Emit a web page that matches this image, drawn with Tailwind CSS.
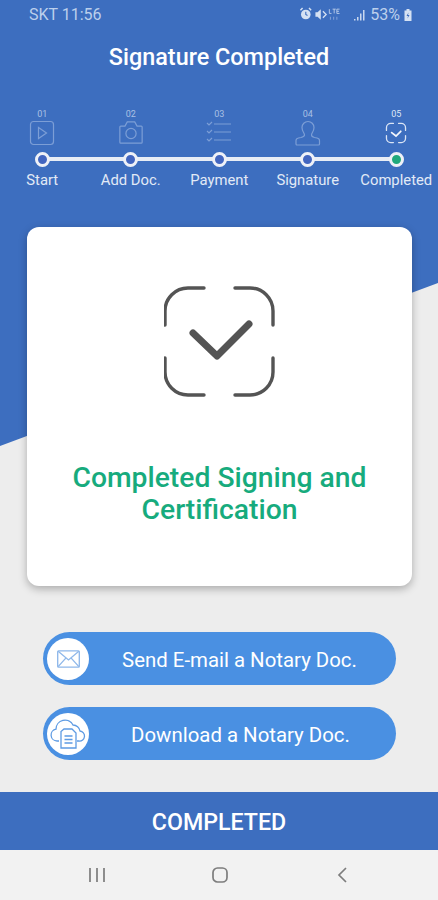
<!DOCTYPE html>
<html lang="en">
<head>
  <meta charset="UTF-8" />
  <meta name="viewport" content="width=device-width, initial-scale=1.0" />
  <title>Signature Completed</title>
  <script src="https://cdn.jsdelivr.net/npm/@tailwindcss/browser@4"></script>
</head>
<body class="bg-[#ededed] font-['Roboto',sans-serif] overflow-hidden">
  <div class="relative w-[438px] h-[900px] flex flex-col overflow-hidden">

    <!-- Diagonal background -->
    <svg class="absolute left-0 top-0" width="438" height="460" viewBox="0 0 438 460">
      <polygon points="0,0 438,0 438,283 0,446" fill="#3d6ebf" />
    </svg>

    <!-- Status bar -->
    <div class="relative h-[29px] shrink-0 pl-[29px] pr-[25px] flex items-center justify-between text-[#bcd0ec] text-[16px]">
      <span>SKT 11:56</span>
      <div class="flex items-center">
        <svg width="50" height="15" viewBox="0 0 46 14" fill="none" class="mr-[4px]">
          <circle cx="6" cy="7" r="4.500" fill="#d5e1f3" />
          <path d="M1 3l2-2M11 3L9 1" stroke="#d5e1f3" stroke-width="1.400" />
          <path d="M6 4.500V7l1.600 1" stroke="#3d6ebf" stroke-width="1" />
          <path d="M15 5h2l3-3v10l-3-3h-2z" fill="#d5e1f3" />
          <path d="M22 4l3 3-3 3" stroke="#d5e1f3" stroke-width="1.200" />
          <path d="M28 2v4h2M31 2h3M32.500 2v4M35 2h2.500M35 2v4h2.500M35 4h2" stroke="#c2d3ec" stroke-width=".8" />
          <path d="M29 9v3M32 9v3M35 9v3" stroke="#7f9fd6" stroke-width="1" />
        </svg>
        <svg width="12" height="13" viewBox="0 0 12 13" class="mr-[5px]">
          <path d="M1 11h1.500v1.500H1zM4 9h1.500v3.500H4zM7 5.500h1.500v7H7zM10 2h1.500v10.500H10z" fill="#c9d8ef" />
        </svg>
        <span>53%</span>
        <svg width="10" height="13" viewBox="0 0 10 13" class="ml-[3px]">
          <path d="M3.500 1h3v1.500H8.500V13h-7V2.500h2z" fill="#d5e1f3" />
          <path d="M5.500 4.500L3.500 8H5l-.5 2.500L6.500 7H5z" fill="#3d6ebf" />
        </svg>
      </div>
    </div>

    <!-- Title -->
    <h1 class="relative h-[56px] shrink-0 flex items-center justify-center text-white text-[23.400px] font-medium pt-[1px]">Signature Completed</h1>

    <!-- Steps -->
    <div class="relative mt-[22px] h-[113px] shrink-0 ml-[-2px] w-[442.500px] grid grid-cols-5">
      <div class="absolute left-[44px] right-[44px] top-[50px] h-[4px] bg-[#e8edf5]"></div>

      <div class="relative flex flex-col items-center">
        <span class="h-[13px] mt-[1px] text-[9px] leading-[13px] text-[#a9c0e4]">01</span>
        <svg class="-mt-[1px]" width="26" height="26" viewBox="0 0 26 26" fill="none" stroke="#7c9ed6" stroke-width="1.200">
          <rect x="1.500" y="1.500" width="23" height="23" rx="3" />
          <path d="M9.500 7.500l8 5.500-8 5.500z" />
        </svg>
        <span class="mt-[6px] size-[15px] rounded-full bg-[#4266c0] border-[3px] border-[#eef1f7]"></span>
        <span class="mt-[3px] text-[14.800px] leading-[20px] text-[#e2eaf6] whitespace-nowrap">Start</span>
      </div>

      <div class="relative flex flex-col items-center">
        <span class="h-[13px] mt-[1px] text-[9px] leading-[13px] text-[#a9c0e4]">02</span>
        <svg class="-mt-[1px]" width="26" height="26" viewBox="-1 0 28 28" fill="none" stroke="#7c9ed6" stroke-width="1.300">
          <path d="M2 6.500h4.500L9 2h8l2.500 4.500H24a1 1 0 0 1 1 1V24a1 1 0 0 1-1 1H2a1 1 0 0 1-1-1V7.500a1 1 0 0 1 1-1z" />
          <circle cx="13" cy="14.500" r="5.500" />
        </svg>
        <span class="mt-[6px] size-[15px] rounded-full bg-[#4266c0] border-[3px] border-[#eef1f7]"></span>
        <span class="mt-[3px] text-[14.800px] leading-[20px] text-[#e2eaf6] whitespace-nowrap">Add Doc.</span>
      </div>

      <div class="relative flex flex-col items-center">
        <span class="h-[13px] mt-[1px] text-[9px] leading-[13px] text-[#a9c0e4]">03</span>
        <svg class="-mt-[1px]" width="26" height="26" viewBox="0 0 26 26" fill="none" stroke="#7c9ed6" stroke-width="1.200">
          <path d="M1 3l2 2 3-3M1 11l2 2 3-3M1 19l2 2 3-3" />
          <path d="M8 4h17M8 12h17M8 20h17" />
        </svg>
        <span class="mt-[6px] size-[15px] rounded-full bg-[#4266c0] border-[3px] border-[#eef1f7]"></span>
        <span class="mt-[3px] text-[14.800px] leading-[20px] text-[#e2eaf6] whitespace-nowrap">Payment</span>
      </div>

      <div class="relative flex flex-col items-center">
        <span class="h-[13px] mt-[1px] text-[9px] leading-[13px] text-[#a9c0e4]">04</span>
        <svg class="-mt-[1px]" width="26" height="26" viewBox="0 0 26 26" fill="none" stroke="#7c9ed6" stroke-width="1.200">
          <path d="M9.500 15c0-2-2.500-3.500-2.500-7.500a6 6 0 0 1 12 0c0 4-2.500 5.500-2.500 7.500 0 1.500 1 2 3 2.500l2.500.5c1.500.3 2.500 1.300 2.500 2.500V24a1 1 0 0 1-1 1H2a1 1 0 0 1-1-1v-3.500c0-1.200 1-2.200 2.500-2.500l2.500-.5c2-.5 3.500-1 3.500-2.500z" />
        </svg>
        <span class="mt-[6px] size-[15px] rounded-full bg-[#4266c0] border-[3px] border-[#eef1f7]"></span>
        <span class="mt-[3px] text-[14.800px] leading-[20px] text-[#e2eaf6] whitespace-nowrap">Signature</span>
      </div>

      <div class="relative flex flex-col items-center">
        <span class="h-[13px] mt-[1px] text-[9px] leading-[13px] text-[#dfe8f6]">05</span>
        <svg class="-mt-[1px]" width="26" height="26" viewBox="-2 -2 30 30" fill="none" stroke="#dbe5f5" stroke-width="1.500" stroke-linecap="round">
          <path d="M10 2H7a5 5 0 0 0-5 5v3M16 2h3a5 5 0 0 1 5 5v3M2 16v3a5 5 0 0 0 5 5h3M24 16v3a5 5 0 0 1-5 5h-3" />
          <path d="M8 12.500l5 4 5.500-5.500" stroke-width="2" stroke="#f2f5fb" />
        </svg>
        <span class="mt-[6px] size-[15px] rounded-full bg-[#1fa97c] border-[3px] border-[#eef1f7]"></span>
        <span class="mt-[3px] text-[14.800px] leading-[20px] text-[#e2eaf6] whitespace-nowrap">Completed</span>
      </div>
    </div>

    <!-- Card -->
    <section class="relative mt-[7px] ml-[27px] w-[385px] h-[359px] shrink-0 bg-white rounded-[12px] shadow-[0_3px_8px_rgba(0,0,0,0.28)] flex flex-col items-center">
      <svg class="mt-[59px]" width="112" height="112" viewBox="0 0 112 112" fill="none" stroke="#545454" stroke-linecap="round">
        <path d="M40 2H24A23 23 0 0 0 1 25v14M71 2h15a23 23 0 0 1 23 23v14M1 72v14a23 23 0 0 0 23 23h16M109 72v14a23 23 0 0 1-23 23H71" stroke-width="3.400" />
        <path d="M29 47l24 23 32-32" stroke-width="7" stroke-linejoin="round" />
      </svg>
      <h2 class="mt-[64px] text-center text-[#17ab7d] text-[28.300px] leading-[32px] font-medium">Completed Signing and<br />Certification</h2>
    </section>

    <!-- Actions -->
    <div class="relative mt-[46px] ml-[43px] mr-[42px] flex flex-col gap-[22px] shrink-0">
      <button class="h-[53px] rounded-full bg-[#4a90e2] flex items-center pl-[4px] text-white text-[20.400px]">
        <span class="size-[42px] rounded-full bg-white flex items-center justify-center shrink-0">
          <svg width="25" height="18" viewBox="0 0 26 20" fill="none" stroke="#8fb8ea" stroke-width="1.500">
            <rect x="1" y="1" width="24" height="18" rx="1" />
            <path d="M1.500 1.500L13 11 24.500 1.500M1.500 18.500l8.500-9.500M24.500 18.500L16 9" />
          </svg>
        </span>
        <span class="flex-1 text-center pr-[6px] pt-[3px] whitespace-nowrap">Send E-mail a Notary Doc.</span>
      </button>
      <button class="h-[53px] rounded-full bg-[#4a90e2] flex items-center pl-[4px] text-white text-[20.400px]">
        <span class="size-[42px] rounded-full bg-white flex items-center justify-center shrink-0">
          <svg width="36" height="32" viewBox="0 0 36 32" fill="none" stroke="#5e9be3" stroke-width="1.300">
            <path d="M9 23H7a6 6 0 0 1-1-11.900A9 9 0 0 1 23 7a7 7 0 0 1 7 6 5 5 0 0 1-1 10h-2" />
            <path d="M14 11h8l4 4v15H11V13.500z" fill="#fff" />
            <path d="M14.500 18h8M14.500 21.500h8M14.500 25h8" />
          </svg>
        </span>
        <span class="flex-1 text-center pr-[4px] pt-[3px] whitespace-nowrap">Download a Notary Doc.</span>
      </button>
    </div>

    <!-- Bottom bar -->
    <div class="relative mt-[32px] h-[58px] shrink-0 bg-[#3d6ebf] flex items-center justify-center text-white text-[23.200px] font-medium pt-[2px]">COMPLETED</div>

    <!-- Android nav -->
    <nav class="relative h-[50px] shrink-0 bg-[#f2f2f2] grid grid-cols-3 items-center justify-items-center px-[24px]">
      <svg class="ml-[16px]" width="18" height="16" viewBox="0 0 18 16" stroke="#7d7d7d" stroke-width="1.700"><path d="M2 1v14M9 1v14M16 1v14" /></svg>
      <svg class="ml-[1px]" width="16" height="16" viewBox="0 0 16 16" fill="none" stroke="#7d7d7d" stroke-width="1.700"><rect x="1" y="1" width="14" height="14" rx="4.500" /></svg>
      <svg class="mr-[14px]" width="12" height="16" viewBox="0 0 12 16" fill="none" stroke="#7d7d7d" stroke-width="1.700"><path d="M10 1L3 8l7 7" /></svg>
    </nav>
  </div>
</body>
</html>
